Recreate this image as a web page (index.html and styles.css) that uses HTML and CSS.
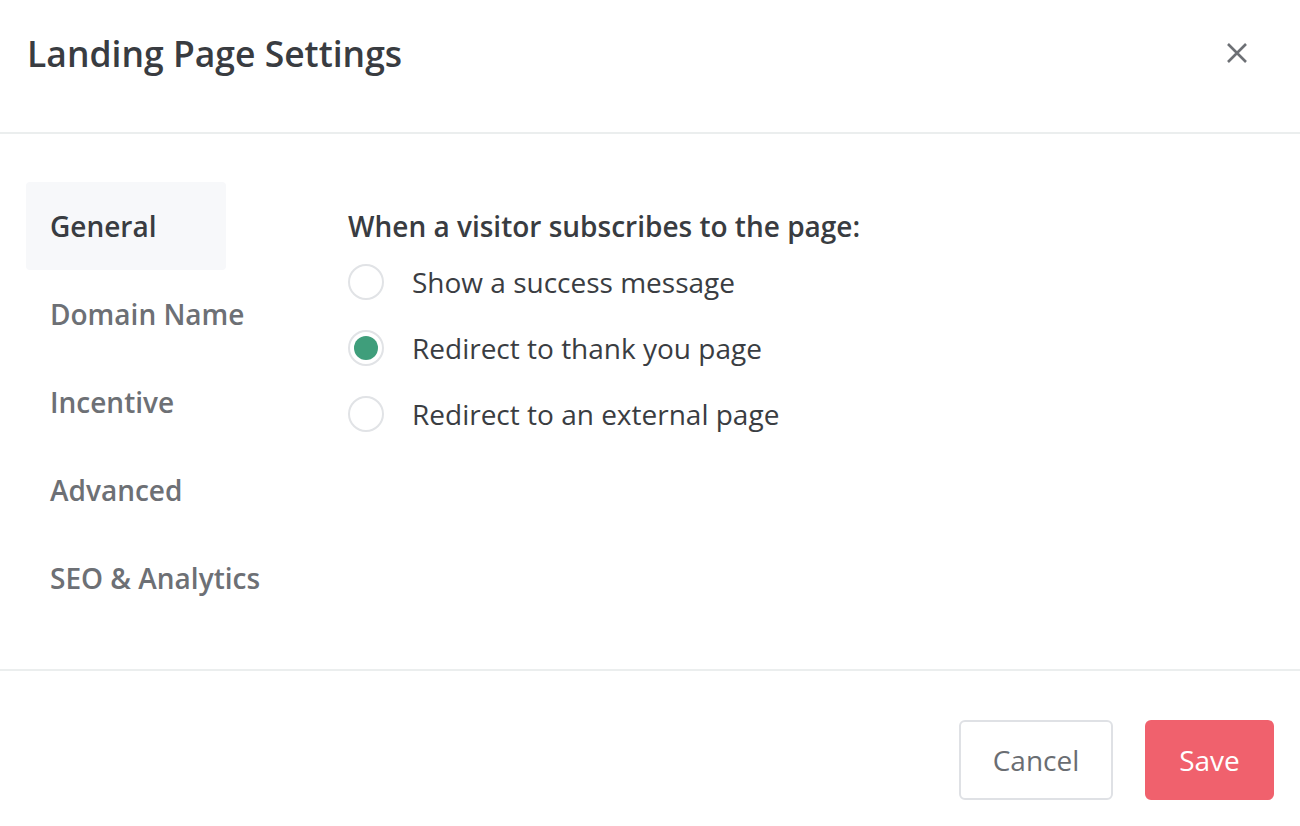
FILE: index.html
```html
<!DOCTYPE html>
<html>
<head>
<meta charset="utf-8">
<link rel="stylesheet" href="styles.css">
</head>
<body>
<div class="modal">
  <header class="modal-header">
    <h1 class="title">Landing Page Settings</h1>
    <button class="close" aria-label="Close">
      <svg width="22" height="22" viewBox="0 0 22 22"><path d="M2 2L20 20M20 2L2 20" stroke="#6d7075" stroke-width="2.6" stroke-linecap="butt"/></svg>
    </button>
  </header>
  <div class="modal-body">
    <nav class="sidebar">
      <div class="nav-item active">General</div>
      <div class="nav-item">Domain Name</div>
      <div class="nav-item">Incentive</div>
      <div class="nav-item">Advanced</div>
      <div class="nav-item">SEO &amp; Analytics</div>
    </nav>
    <section class="content">
      <div class="question">When a visitor subscribes to the page:</div>
      <div class="options">
        <label class="option"><span class="radio"></span><span class="label">Show a success message</span></label>
        <label class="option"><span class="radio checked"></span><span class="label">Redirect to thank you page</span></label>
        <label class="option"><span class="radio"></span><span class="label">Redirect to an external page</span></label>
      </div>
    </section>
  </div>
  <footer class="modal-footer">
    <button class="btn btn-cancel">Cancel</button>
    <button class="btn btn-save">Save</button>
  </footer>
</div>
</body>
</html>
```
FILE: styles.css
```css
html, body {
  margin: 0;
  padding: 0;
  background: #ffffff;
}
body {
  font-family: "Open Sans", "Liberation Sans", sans-serif;
  color: #3a3d42;
  width: 1300px;
  height: 826px;
  overflow: hidden;
}
.modal {
  display: flex;
  flex-direction: column;
  height: 826px;
}
.modal-header {
  box-sizing: border-box;
  height: 134px;
  border-bottom: 2px solid #ebeeee;
  display: flex;
  align-items: flex-start;
  justify-content: space-between;
  padding: 28px 52px 0 27px;
}
.title {
  margin: 0;
  font-size: 35.5px;
  line-height: 50px;
  font-weight: 600;
  color: #393c41;
}
.close {
  border: 0;
  background: none;
  padding: 0;
  margin-top: 14px;
  width: 22px;
  height: 22px;
  cursor: pointer;
}
.close svg { display: block; }
.modal-body {
  display: flex;
  flex: 0 0 auto;
  height: 537px;
  box-sizing: border-box;
  padding: 48px 0 0 26px;
  border-bottom: 2px solid #ebeeee;
}
.sidebar {
  width: 200px;
  display: flex;
  flex-direction: column;
}
.nav-item {
  height: 88px;
  display: flex;
  align-items: center;
  padding-left: 24px;
  font-size: 28px;
  font-weight: 600;
  color: #6d7075;
  border-radius: 4px;
  white-space: nowrap;
}
.nav-item.active {
  background: #f7f8fa;
  color: #393c41;
}
.content {
  margin-left: 122px;
  padding-top: 24px;
}
.question {
  font-size: 28px;
  font-weight: 600;
  line-height: 40px;
  color: #393c41;
}
.options {
  display: flex;
  flex-direction: column;
  gap: 30px;
  margin-top: 18px;
}
.option {
  display: flex;
  align-items: center;
  height: 36px;
}
.radio {
  box-sizing: border-box;
  width: 36px;
  height: 36px;
  border-radius: 50%;
  border: 2px solid #e1e3e6;
  display: flex;
  align-items: center;
  justify-content: center;
}
.radio.checked::after {
  content: "";
  width: 24px;
  height: 24px;
  border-radius: 50%;
  background: #3f9e7b;
}
.label {
  margin-left: 28px;
  font-size: 28px;
  color: #3a3d42;
  line-height: 36px;
}
.modal-footer {
  display: flex;
  justify-content: flex-end;
  gap: 32px;
  padding: 49px 26px 0 0;
}
.btn {
  height: 80px;
  border-radius: 6px;
  font-family: "Open Sans", "Liberation Sans", sans-serif;
  font-size: 28px;
  padding: 0;
  cursor: pointer;
}
.btn-cancel {
  width: 154px;
  background: #ffffff;
  border: 2px solid #dfe1e5;
  color: #6a6d72;
}
.btn-save {
  width: 129px;
  background: #f0616d;
  border: 0;
  color: #ffffff;
}
```
